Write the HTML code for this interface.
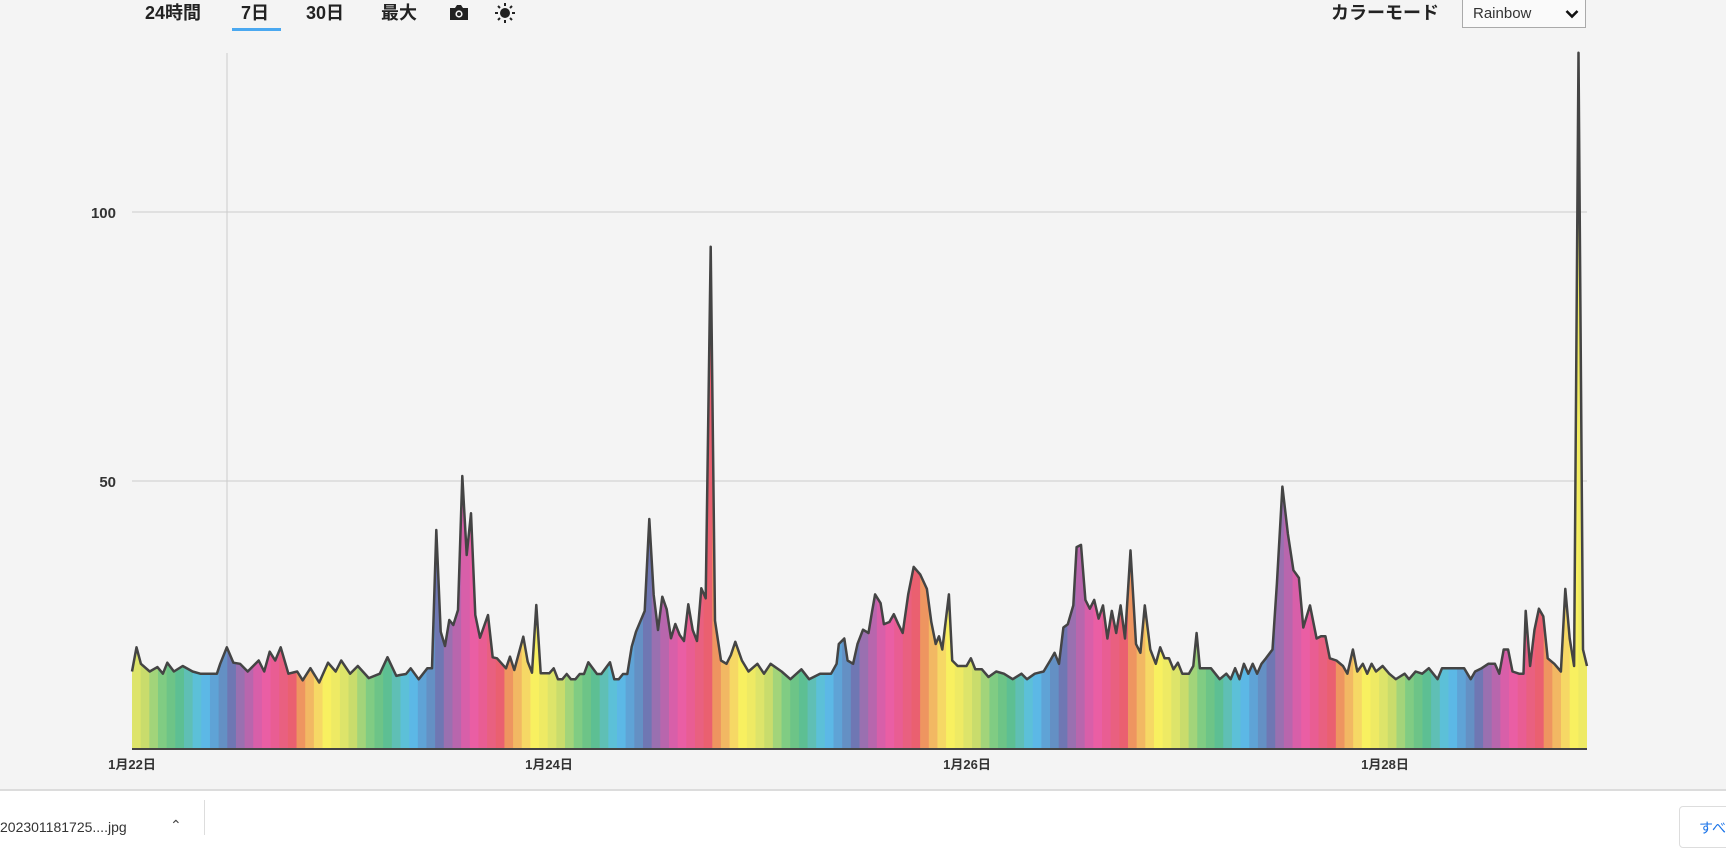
<!DOCTYPE html>
<html><head><meta charset="utf-8">
<style>
html,body{margin:0;padding:0;width:1726px;height:835px;overflow:hidden;background:#fff;font-family:"Liberation Sans","Noto Sans CJK JP",sans-serif;}
#top{position:absolute;left:0;top:0;width:1726px;height:789px;background:#f4f4f4;border-bottom:2px solid #dcdcdc;}
.t{position:absolute;top:2px;font-size:18px;font-weight:bold;color:#222;line-height:22px;}
#ul{position:absolute;left:232px;top:28px;width:49px;height:3px;background:#4aa8f0;}
#sel{position:absolute;left:1462px;top:-1px;width:124px;height:29px;border:1px solid #aaa;background:#fafafa;box-sizing:border-box;}
#sel span{position:absolute;left:10px;top:5px;font-size:15px;color:#333;}
#bot{position:absolute;left:0;top:791px;width:1726px;height:44px;background:#fff;}
</style></head><body>
<div id="top">
<div class="t" style="left:145px">24時間</div>
<div class="t" style="left:241px">7日</div>
<div id="ul"></div>
<div class="t" style="left:306px">30日</div>
<div class="t" style="left:381px">最大</div>
<svg style="position:absolute;left:449px;top:4px" width="20" height="17" viewBox="0 0 20 17"><path d="M1 4h5l2-3h4l2 3h5v12H1z" fill="#222"/><circle cx="10" cy="10" r="3.6" fill="#f4f4f4"/><circle cx="10" cy="10" r="2" fill="#222"/></svg>
<svg style="position:absolute;left:494px;top:2px" width="22" height="22" viewBox="0 0 22 22"><circle cx="11" cy="11" r="5" fill="#222"/><g stroke="#222" stroke-width="2"><path d="M11 1v3M11 18v3M1 11h3M18 11h3M4 4l2 2M16 16l2 2M4 18l2-2M16 6l2-2"/></g></svg>
<div class="t" style="left:1331px">カラーモード</div>
<div id="sel"><span>Rainbow</span><svg style="position:absolute;left:102px;top:9px" width="14" height="10" viewBox="0 0 14 10"><path d="M1.5 2l5.5 5.5 5.5-5.5" stroke="#111" stroke-width="2.6" fill="none"/></svg></div>
<svg id="ch" style="position:absolute;left:0;top:0" width="1726" height="789"></svg>
</div>
<div id="bot">
<div style="position:absolute;left:0;top:28px;font-size:14px;color:#333">202301181725....jpg</div>
<div style="position:absolute;left:170px;top:26px;font-size:14px;color:#444">&#8963;</div>
<div style="position:absolute;left:204px;top:9px;width:1px;height:35px;background:#ddd"></div>
<div style="position:absolute;left:1679px;top:15px;width:60px;height:40px;border:1px solid #ddd;border-radius:4px;background:#fff"><span style="position:absolute;left:19px;top:11px;font-size:14px;color:#1a73e8">すべ</span></div>
</div>
<script>
var S=1.1008;
var d1=[[120,610],[124,588],[128,603],[136,610],[143,606],[148,612],[152,602],[158,610],[166,605],[175,610],[182,612],[197,612],[200,603],[206,588],[212,602],[218,603],[225,610],[235,600],[240,610],[245,592],[250,600],[255,588],[262,612],[270,610],[275,618],[282,607],[290,620],[298,602],[305,610],[310,600],[318,612],[325,605],[335,616],[345,612],[352,597],[360,614]];
var z=[[0,675],[18,672],[32,655],[56,688],[82,655],[96,655],[109,240],[122,545],[135,588],[148,510],[160,525],[174,480],[187,78],[200,315],[213,190],[226,495],[240,563],[264,495],[278,622],[291,625],[318,655],[330,620],[343,660],[370,560],[383,635],[396,668],[409,465],[422,670],[448,670],[461,655],[474,688],[487,688],[500,672],[513,688],[526,688],[539,672],[552,672],[565,637],[591,672],[604,672],[630,637],[643,688],[656,688],[669,672],[682,672],[695,590],[708,545],[734,483],[748,207],[761,435],[774,540],[787,440],[800,478],[813,565],[826,522],[839,555],[852,573],[865,463],[878,540],[891,573],[904,415],[917,445],[932,-610],[945,512]];
var d2=[[655,600],[660,603],[664,595],[668,583],[674,600],[680,610],[688,603],[694,612],[700,603],[710,610],[718,617],[728,608],[735,617],[745,612],[755,612],[760,603],[762,585],[767,580],[770,600],[775,603],[779,585],[784,572],[789,575],[792,557],[795,540],[800,548],[803,567],[808,565],[812,558],[816,567],[820,575],[825,540],[830,515],[836,522],[842,535],[846,565],[850,585],[853,578],[856,590],[862,540],[865,600],[870,605],[878,605],[882,598],[886,608],[892,608],[898,615],[905,610],[912,612],[920,617],[928,612],[933,617],[940,612],[948,610],[954,600],[958,593],[962,603],[966,570],[970,567],[975,550],[978,497],[982,495],[986,545],[990,553],[994,545],[998,562],[1002,550],[1006,580],[1010,555],[1014,575],[1018,550],[1022,580],[1027,500],[1032,585],[1036,593],[1040,550],[1045,590],[1050,603],[1054,588],[1058,598],[1062,598],[1066,608],[1070,602],[1074,612],[1080,612],[1084,605],[1087,575],[1090,607],[1100,607],[1108,617],[1114,612],[1118,617],[1122,607],[1126,617],[1130,603],[1134,612],[1138,603],[1142,612],[1146,603],[1150,598],[1156,590],[1160,530],[1165,442],[1170,485],[1175,518],[1180,525],[1184,570],[1190,550],[1196,580],[1200,578],[1204,578],[1208,598],[1214,600],[1220,605],[1224,612],[1229,590],[1233,610],[1238,603],[1242,612],[1246,603],[1250,610],[1256,605],[1262,612],[1268,617],[1276,612],[1280,617],[1286,610],[1292,612],[1298,607],[1302,612],[1306,617],[1310,607],[1330,607],[1336,617],[1340,610],[1346,607],[1352,603],[1358,603],[1362,612],[1366,590],[1370,590],[1374,610],[1380,612],[1384,612],[1386,555],[1390,605],[1394,572],[1398,553],[1402,560],[1406,598],[1412,603],[1418,610],[1422,535],[1426,580],[1430,605],[1434,48],[1438,590],[1442,605]];
var P=[];
d1.forEach(function(p){P.push([p[0]*S,p[1]*S]);});
z.forEach(function(p){P.push([400+p[0]/3,450+p[1]/3]);});
d2.forEach(function(p){P.push([p[0]*S,p[1]*S]);});
P[0][0]=132;P[P.length-1][0]=1587;
var pts=P.map(function(p){return p[0].toFixed(1)+','+p[1].toFixed(1);}).join(' ');
var C=['#c9dc6c','#a2d47a','#80cc83','#6dc487','#5dbf93','#5fbfb5','#5cc0d8','#5cb8e6','#5fa3d6','#6490c4','#6f77b3','#9a70b0','#b866ad','#d85fa9','#ea5ea4','#e95d93','#e96080','#ea6070','#ee9560','#f2b863','#f6d865','#f8f060','#eeea64','#dde46a'];
var h='<defs><clipPath id="cp"><polygon points="132,749 '+pts+' 1587,749"/></clipPath></defs>';
h+='<line x1="132" y1="212" x2="1587" y2="212" stroke="#ccc"/><line x1="132" y1="481" x2="1587" y2="481" stroke="#ccc"/><line x1="227" y1="53" x2="227" y2="749" stroke="#ccc"/>';
h+='<g clip-path="url(#cp)">';
var w=1455/168;
for(var i=0;i<168;i++){h+='<rect x="'+(132+i*w).toFixed(2)+'" y="40" width="'+(w+0.6).toFixed(2)+'" height="710" fill="'+C[(i+23)%24]+'"/>';}
h+='</g>';
h+='<polyline points="'+pts+'" fill="none" stroke="#444" stroke-width="2.5" stroke-linejoin="round"/>';
h+='<line x1="132" y1="749" x2="1587" y2="749" stroke="#444" stroke-width="2"/>';
var st='font-family="Liberation Sans,Noto Sans CJK JP,sans-serif" font-weight="bold" fill="#333"';
h+='<text x="116" y="218" text-anchor="end" font-size="15" '+st+'>100</text><text x="116" y="487" text-anchor="end" font-size="15" '+st+'>50</text>';
[[132,'1月22日'],[549,'1月24日'],[967,'1月26日'],[1385,'1月28日']].forEach(function(l){h+='<text x="'+l[0]+'" y="769" text-anchor="middle" font-size="13" '+st+'>'+l[1]+'</text>';});
document.getElementById('ch').innerHTML=h;
</script>
</body></html>
